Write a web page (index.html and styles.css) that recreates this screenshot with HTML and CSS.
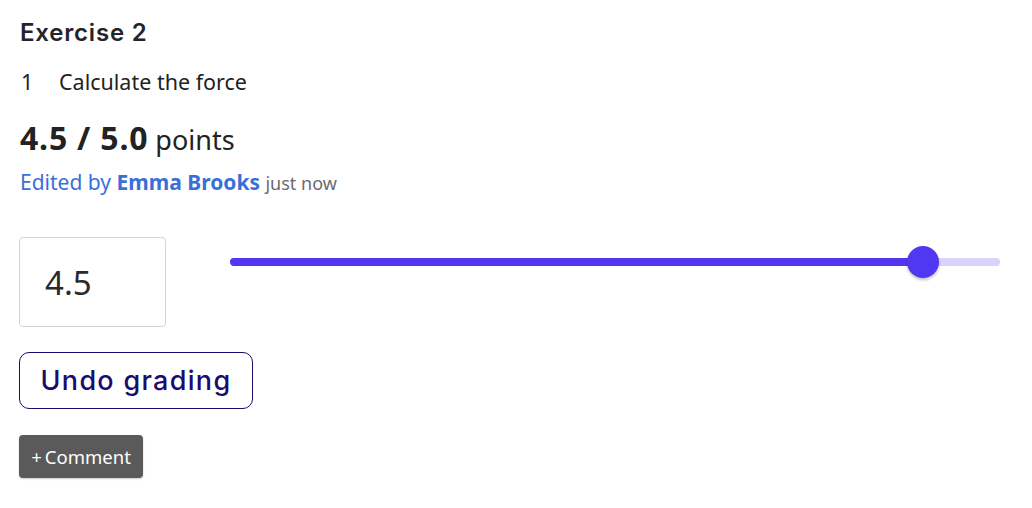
FILE: index.html
```html
<!DOCTYPE html>
<html lang="en">
<head>
  <meta charset="UTF-8" />
  <title>Exercise 2</title>
  <link rel="stylesheet" href="styles.css">
</head>
<body>
  <div class="grading">
    <h2 class="title">Exercise 2</h2>
    <div class="question">
      <span class="qnum">1</span>
      <span class="qtext">Calculate the force</span>
    </div>
    <div class="score"><strong>4.5 / 5.0</strong> points</div>
    <div class="edited">Edited by <b>Emma Brooks</b> <span class="when">just now</span></div>

    <div class="grade-row">
      <input class="grade-input" type="text" value="4.5" />
      <div class="slider">
        <div class="track"></div>
        <div class="fill" style="width: 90%"></div>
        <div class="thumb" style="left: 90%"></div>
      </div>
    </div>

    <button class="undo-btn">Undo grading</button>
    <div>
      <button class="comment-btn">+&thinsp;Comment</button>
    </div>
  </div>
</body>
</html>
```

FILE: styles.css
```css
html, body {
  margin: 0;
  padding: 0;
  background: #fff;
  color: #222;
  font-family: 'Noto Sans', 'Lato', sans-serif;
}

.grading {
  padding: 16px 20px;
}

.title {
  margin: 0;
  font-family: 'Inter', sans-serif;
  font-size: 24px;
  font-weight: 600;
  line-height: 34px;
  color: #23252a;
  letter-spacing: 0.8px;
}

.question {
  display: flex;
  margin-top: 18px;
  font-size: 21.5px;
  line-height: 28px;
}

.qnum {
  width: 38px;
  padding-left: 1px;
}

.score {
  margin-top: 22px;
  font-size: 27px;
  line-height: 40px;
}

.score strong {
  font-size: 32px;
  font-weight: 700;
  letter-spacing: 0.8px;
}

.edited {
  margin-top: 9px;
  font-size: 21px;
  line-height: 26px;
  color: #3a6fd8;
}

.edited .when {
  font-size: 18px;
  color: #6b6b70;
}

.grade-row {
  display: flex;
  align-items: flex-start;
  margin-top: 41px;
}

.grade-input {
  box-sizing: border-box;
  width: 147px;
  height: 90px;
  margin: 0 0 0 -1px;
  padding: 0 0 0 25px;
  border: 1px solid #d4d4d4;
  border-radius: 4px;
  font-family: 'Noto Sans', sans-serif;
  font-size: 33px;
  color: #2a2a2a;
  outline: none;
}

.slider {
  position: relative;
  flex: 1;
  height: 8px;
  margin: 21px 12px 0 64px;
}

.track {
  position: absolute;
  inset: 0;
  background: #d8d3fb;
  border-radius: 4px;
}

.fill {
  position: absolute;
  top: 0;
  bottom: 0;
  left: 0;
  background: #5038f2;
  border-radius: 4px;
}

.thumb {
  position: absolute;
  top: 4px;
  width: 32px;
  height: 32px;
  margin: -16px 0 0 -16px;
  background: #5038f2;
  border-radius: 50%;
  box-shadow: 0 2px 3px rgba(0, 0, 0, 0.25);
}

.undo-btn {
  display: block;
  box-sizing: border-box;
  width: 234px;
  height: 57px;
  margin: 25px 0 0 -1px;
  padding: 0;
  background: #fff;
  border: 1px solid #1b0b6e;
  border-radius: 10px;
  color: #1b0b6e;
  font-family: 'Inter', sans-serif;
  font-size: 27px;
  font-weight: 500;
  letter-spacing: 1.3px;
  cursor: pointer;
}

.comment-btn {
  box-sizing: border-box;
  width: 124px;
  height: 43px;
  margin: 26px 0 0 -1px;
  padding: 0;
  background: #5a5a5a;
  border: none;
  border-radius: 4px;
  color: #fff;
  font-family: 'Noto Sans', sans-serif;
  font-size: 18.5px;
  cursor: pointer;
  box-shadow: 0 1px 2px rgba(0, 0, 0, 0.2);
}
```
